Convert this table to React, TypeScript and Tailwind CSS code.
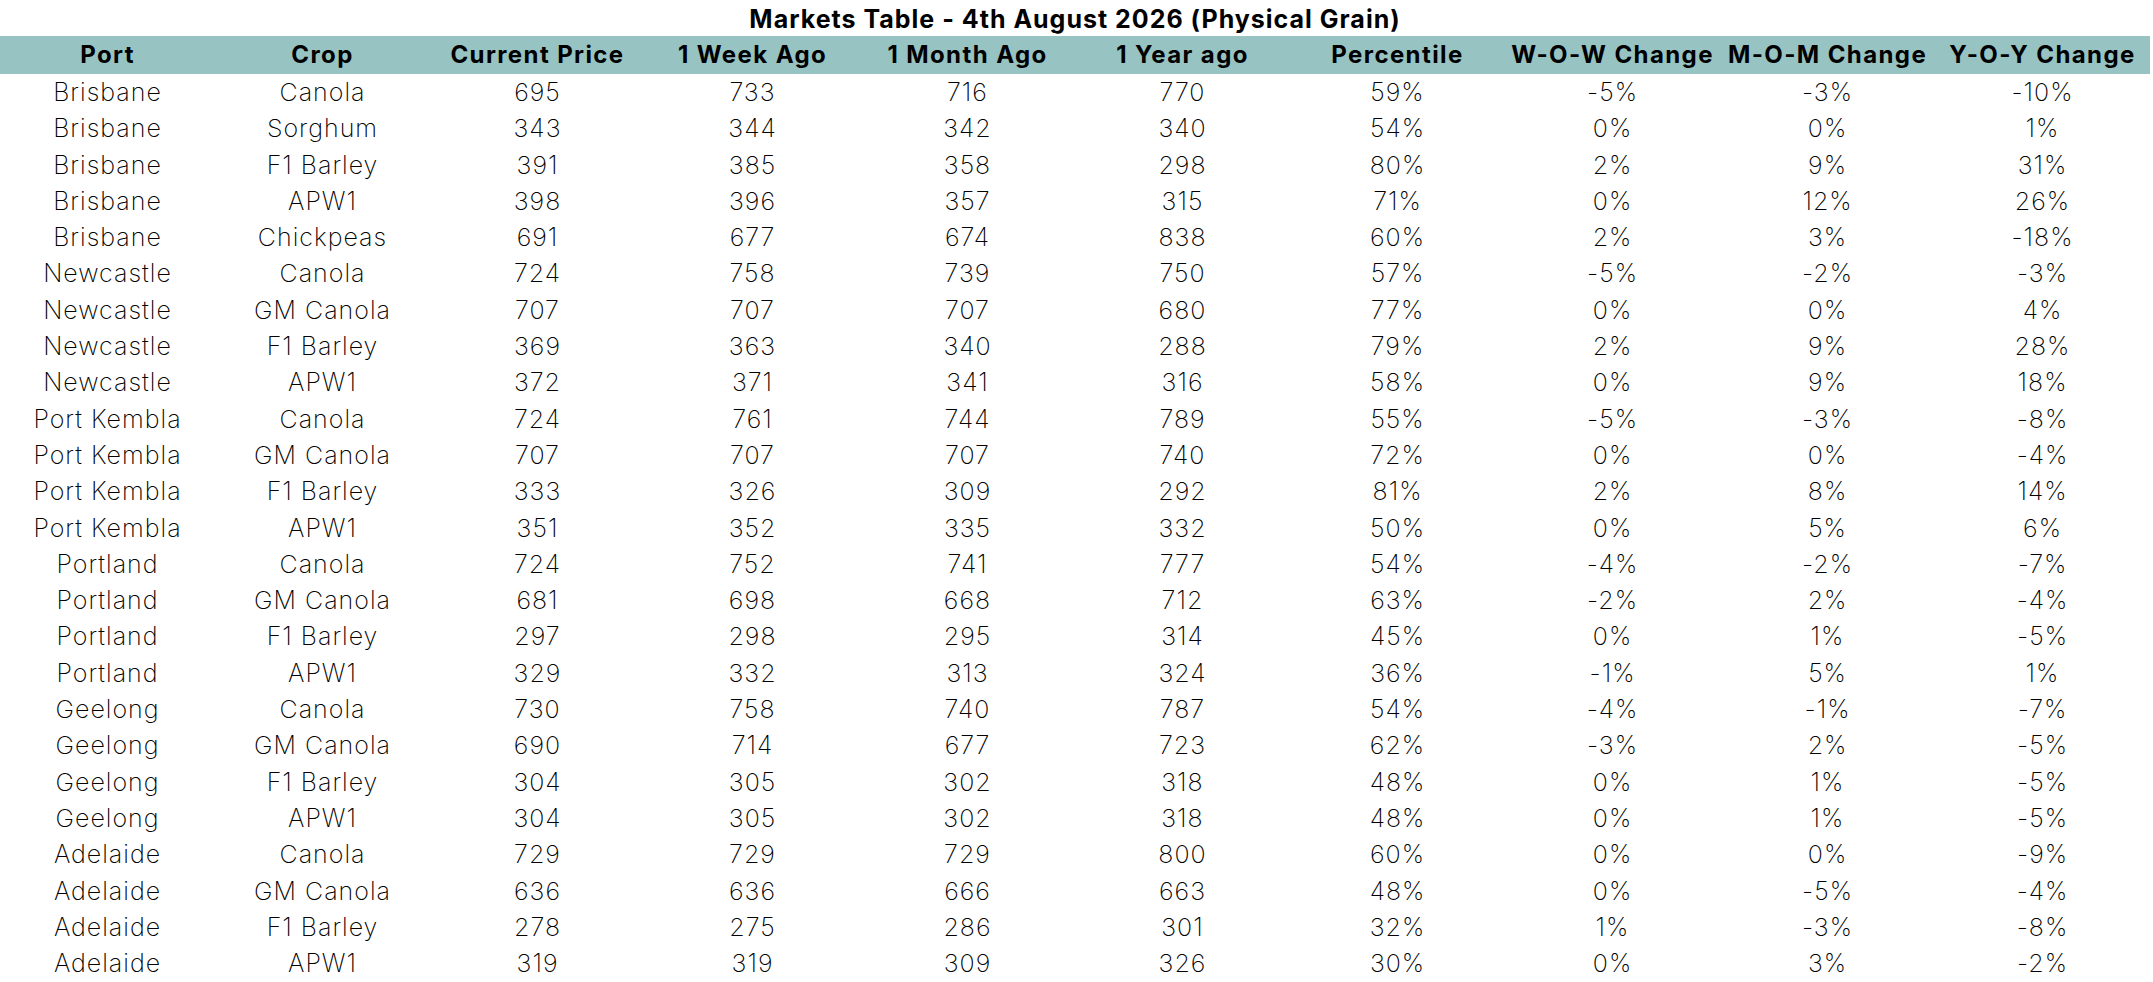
const columns = [
  "Port",
  "Crop",
  "Current Price",
  "1 Week Ago",
  "1 Month Ago",
  "1 Year ago",
  "Percentile",
  "W-O-W Change",
  "M-O-M Change",
  "Y-O-Y Change",
]

const rows: string[][] = [
  ["Brisbane", "Canola", "695", "733", "716", "770", "59%", "-5%", "-3%", "-10%"],
  ["Brisbane", "Sorghum", "343", "344", "342", "340", "54%", "0%", "0%", "1%"],
  ["Brisbane", "F1 Barley", "391", "385", "358", "298", "80%", "2%", "9%", "31%"],
  ["Brisbane", "APW1", "398", "396", "357", "315", "71%", "0%", "12%", "26%"],
  ["Brisbane", "Chickpeas", "691", "677", "674", "838", "60%", "2%", "3%", "-18%"],
  ["Newcastle", "Canola", "724", "758", "739", "750", "57%", "-5%", "-2%", "-3%"],
  ["Newcastle", "GM Canola", "707", "707", "707", "680", "77%", "0%", "0%", "4%"],
  ["Newcastle", "F1 Barley", "369", "363", "340", "288", "79%", "2%", "9%", "28%"],
  ["Newcastle", "APW1", "372", "371", "341", "316", "58%", "0%", "9%", "18%"],
  ["Port Kembla", "Canola", "724", "761", "744", "789", "55%", "-5%", "-3%", "-8%"],
  ["Port Kembla", "GM Canola", "707", "707", "707", "740", "72%", "0%", "0%", "-4%"],
  ["Port Kembla", "F1 Barley", "333", "326", "309", "292", "81%", "2%", "8%", "14%"],
  ["Port Kembla", "APW1", "351", "352", "335", "332", "50%", "0%", "5%", "6%"],
  ["Portland", "Canola", "724", "752", "741", "777", "54%", "-4%", "-2%", "-7%"],
  ["Portland", "GM Canola", "681", "698", "668", "712", "63%", "-2%", "2%", "-4%"],
  ["Portland", "F1 Barley", "297", "298", "295", "314", "45%", "0%", "1%", "-5%"],
  ["Portland", "APW1", "329", "332", "313", "324", "36%", "-1%", "5%", "1%"],
  ["Geelong", "Canola", "730", "758", "740", "787", "54%", "-4%", "-1%", "-7%"],
  ["Geelong", "GM Canola", "690", "714", "677", "723", "62%", "-3%", "2%", "-5%"],
  ["Geelong", "F1 Barley", "304", "305", "302", "318", "48%", "0%", "1%", "-5%"],
  ["Geelong", "APW1", "304", "305", "302", "318", "48%", "0%", "1%", "-5%"],
  ["Adelaide", "Canola", "729", "729", "729", "800", "60%", "0%", "0%", "-9%"],
  ["Adelaide", "GM Canola", "636", "636", "666", "663", "48%", "0%", "-5%", "-4%"],
  ["Adelaide", "F1 Barley", "278", "275", "286", "301", "32%", "1%", "-3%", "-8%"],
  ["Adelaide", "APW1", "319", "319", "309", "326", "30%", "0%", "3%", "-2%"],
]

export default function App() {
  return (
    <div className="min-h-screen bg-white text-black font-['Inter',sans-serif]">
      <div className="w-[2150px]">
        {/* Title */}
        <div className="h-[36px] flex items-center justify-center pt-1">
          <h1 className="text-[25px] font-bold tracking-[1px]">
            Markets Table - 4th August 2026 (Physical Grain)
          </h1>
        </div>

        {/* Header */}
        <div className="grid grid-cols-10 h-[38px] bg-[#97c3c2]">
          {columns.map((col) => (
            <div
              key={col}
              className="flex items-center justify-center whitespace-nowrap text-[24px] font-bold tracking-[1.4px]"
            >
              {col}
            </div>
          ))}
        </div>

        {/* Rows */}
        {rows.map((row, i) => (
          <div key={i} className="grid grid-cols-10 h-[36.3px]">
            {row.map((cell, j) => (
              <div
                key={j}
                className="flex items-center justify-center whitespace-nowrap text-[25px] font-extralight tracking-[1px]"
              >
                {cell}
              </div>
            ))}
          </div>
        ))}
      </div>
    </div>
  )
}
